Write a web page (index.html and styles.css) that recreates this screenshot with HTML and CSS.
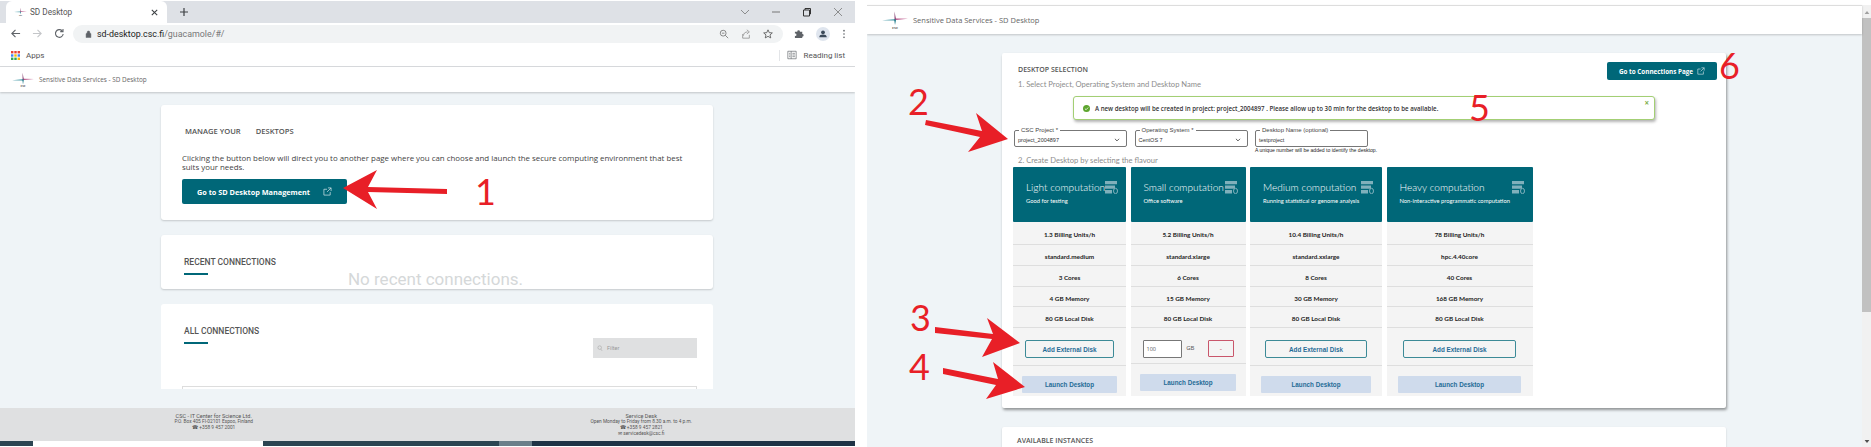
FILE: index.html
```html
<!DOCTYPE html>
<html lang="en">
<head>
    <meta charset="UTF-8">
    <title>SD Desktop</title>
    <link rel="stylesheet" href="styles.css">
</head>
<body>
    <section class="shot shot-left">
        <div class="tabstrip">
            <div class="tab">
                <svg class="csc-tab" viewBox="0 0 26 18"><use href="#csc-mark"/></svg>
                <span>SD Desktop</span>
                <svg class="tab-x" viewBox="0 0 10 10"><path d="M2 2l6 6M8 2l-6 6" stroke="#3c4043" stroke-width="1.2"/></svg>
            </div>
            <svg class="tab-new" viewBox="0 0 10 10"><path d="M5 1v8M1 5h8" stroke="#3c4043" stroke-width="1.2"/></svg>
            <div class="win-buttons">
                <svg viewBox="0 0 10 10"><path d="M1 3l4 4 4-4" fill="none" stroke="#777" stroke-width=".8"/></svg>
                <svg viewBox="0 0 10 10"><path d="M1 5h8" stroke="#777"/></svg>
                <svg viewBox="0 0 10 10"><path d="M1.5 3h6v6h-6zM3 3V1.5h5.5V7H7.5" fill="none" stroke="#333"/></svg>
                <svg viewBox="0 0 10 10"><path d="M1 1l8 8M9 1l-8 8" stroke="#777" stroke-width=".8"/></svg>
            </div>
        </div>
        <div class="toolbar">
            <svg class="nav-icon" viewBox="0 0 12 12"><path d="M11 6H2M6 2L2 6l4 4" fill="none" stroke="#5f6368" stroke-width="1.2"/></svg>
            <svg class="nav-icon" viewBox="0 0 12 12"><path d="M1 6h9M6 2l4 4-4 4" fill="none" stroke="#c4c6c9" stroke-width="1.2"/></svg>
            <svg class="nav-icon" viewBox="0 0 12 12"><path d="M10 6.5A4.2 4.2 0 1 1 8.8 3M9.8 1v3h-3" fill="none" stroke="#5f6368" stroke-width="1.2"/></svg>
            <div class="omnibox">
                <svg class="lock" viewBox="0 0 8 10"><path d="M1 4.500h6V9.500H1zM2.300 4.500V3a1.700 1.700 0 0 1 3.400 0v1.500" fill="#5f6368" stroke="#5f6368" stroke-width=".6"/></svg>
                <span class="url">sd-desktop.csc.fi<em>/guacamole/#/</em></span>
                <div class="omni-icons">
                    <svg viewBox="0 0 12 12"><circle cx="5" cy="5" r="3.5" fill="none" stroke="#777"/><path d="M7.500 7.500L11 11M3.500 5h3" stroke="#777"/></svg>
                    <svg viewBox="0 0 12 12"><path d="M2 6v5h8V7M3 8c0-3 2-4.500 5-4.500M7 1l3 2.500L7 6" fill="none" stroke="#888" stroke-width=".9"/></svg>
                    <svg viewBox="0 0 12 12"><path d="M6 1l1.500 3.400 3.700.3-2.800 2.400.9 3.600L6 8.800l-3.300 1.900.9-3.600L.8 4.700l3.700-.3z" fill="none" stroke="#555"/></svg>
                </div>
            </div>
            <svg class="puzzle" viewBox="0 0 12 12"><path d="M1 4h2.500a1.500 1.500 0 1 1 3 0H9v2.500a1.500 1.500 0 1 1 0 3V11H1V8.500a1.300 1.300 0 1 0 0-2.500z" fill="#5f6368"/></svg>
            <div class="avatar"><svg viewBox="0 0 12 12"><circle cx="6" cy="4" r="2.3" fill="#3c4a5a"/><path d="M1.500 10c0-2.500 2-3.300 4.500-3.300s4.500.8 4.500 3.300z" fill="#3c4a5a"/></svg></div>
            <svg class="kebab" viewBox="0 0 4 12"><circle cx="2" cy="2" r="1" fill="#5f6368"/><circle cx="2" cy="6" r="1" fill="#5f6368"/><circle cx="2" cy="10" r="1" fill="#5f6368"/></svg>
        </div>
        <div class="bookmarks">
            <svg class="apps" viewBox="0 0 9 9">
                <rect width="2.4" height="2.4" fill="#ea4335"/><rect x="3.3" width="2.4" height="2.4" fill="#ea4335"/><rect x="6.6" width="2.4" height="2.4" fill="#ea4335"/>
                <rect y="3.3" width="2.4" height="2.4" fill="#4285f4"/><rect x="3.3" y="3.3" width="2.4" height="2.4" fill="#fbbc04"/><rect x="6.6" y="3.3" width="2.4" height="2.4" fill="#4285f4"/>
                <rect y="6.6" width="2.4" height="2.4" fill="#34a853"/><rect x="3.3" y="6.6" width="2.4" height="2.4" fill="#34a853"/><rect x="6.6" y="6.6" width="2.4" height="2.4" fill="#fbbc04"/>
            </svg>
            <span>Apps</span>
            <div class="reading">
                <svg viewBox="0 0 12 12"><path d="M1 1.500h10v9H1zM5 1.500v9M2.500 4h1.500M2.500 6h1.500M2.500 8h1.500M6.500 4H9.500M6.500 6H9.500M6.500 8H9.500" fill="none" stroke="#5f6368" stroke-width=".8"/></svg>
                <span>Reading list</span>
            </div>
        </div>

        <header class="app-header left-head">
            <svg class="csc-logo" viewBox="0 0 26 18"><use href="#csc-mark"/></svg>
            <span>Sensitive Data Services - SD Desktop</span>
        </header>

        <main class="left-main">
            <div class="card card-manage">
                <h2 class="manage-title"><span>MANAGE YOUR</span><span>DESKTOPS</span></h2>
                <p class="manage-text">Clicking the button below will direct you to another page where you can choose and launch the secure computing environment that best suits your needs.</p>
                <button class="btn-teal btn-manage">
                    <span>Go to SD Desktop Management</span>
                    <svg class="ext-icon" viewBox="0 0 10 10"><use href="#ext-mark"/></svg>
                </button>
            </div>
            <div class="card card-recent">
                <h2 class="conn-title">RECENT CONNECTIONS</h2>
                <div class="conn-rule"></div>
                <p class="no-recent">No recent connections.</p>
            </div>
            <div class="card card-all">
                <h2 class="conn-title">ALL CONNECTIONS</h2>
                <div class="conn-rule"></div>
                <div class="filter">
                    <svg viewBox="0 0 10 12"><circle cx="4.5" cy="4.5" r="3" fill="none" stroke="#999" stroke-width=".8"/><path d="M6.500 7l2 3" stroke="#999" stroke-width=".8"/></svg>
                    <span>Filter</span>
                </div>
                <div class="conn-table"></div>
            </div>
        </main>

        <footer class="left-foot">
            <div class="foot-col">
                <strong>CSC - IT Center for Science Ltd.</strong>
                <span>P.O. Box 405 FI-02101 Espoo, Finland</span>
                <span>&#9742; +358 9 457 2001</span>
            </div>
            <div class="foot-col">
                <strong>Service Desk</strong>
                <span>Open Monday to Friday from 8.30 a.m. to 4 p.m.</span>
                <span>&#9742; +358 9 457 2821</span>
                <span>&#9993; servicedesk@csc.fi</span>
            </div>
        </footer>
        <div class="taskbar">
            <i class="tb-dark tb-a"></i><i class="tb-white"></i><i class="tb-dark tb-b"></i><i class="tb-light"></i><i class="tb-dark tb-c"></i>
        </div>
    </section>

    <section class="shot shot-right">
        <div class="right-page">
            <header class="app-header right-head">
                <svg class="csc-logo" viewBox="0 0 26 18"><use href="#csc-mark"/></svg>
                <span>Sensitive Data Services - SD Desktop</span>
            </header>
            <main class="right-main">
                <div class="card card-select">
                    <div class="select-top">
                        <div>
                            <h2 class="select-title">DESKTOP SELECTION</h2>
                            <p class="step">1. Select Project, Operating System and Desktop Name</p>
                        </div>
                        <button class="btn-teal btn-conn">
                            <span>Go to Connections Page</span>
                            <svg class="ext-icon" viewBox="0 0 10 10"><use href="#ext-mark"/></svg>
                        </button>
                    </div>
                    <div class="alert">
                        <svg class="alert-ok" viewBox="0 0 10 10"><circle cx="5" cy="5" r="5" fill="#5da52e"/><path d="M2.700 5.200l1.700 1.600 3-3.200" fill="none" stroke="#fff" stroke-width="1.1"/></svg>
                        <span>A new desktop will be created in project: project_2004897 . Please allow up to 30 min for the desktop to be available.</span>
                        <span class="alert-x">&times;</span>
                    </div>
                    <div class="fields">
                        <div class="field">
                            <label>CSC Project *</label>
                            <span>project_2004897</span>
                            <svg viewBox="0 0 10 6"><path d="M1.500 1l3.500 3.500L8.500 1" fill="none" stroke="#333" stroke-width="1.3"/></svg>
                        </div>
                        <div class="field">
                            <label>Operating System *</label>
                            <span>CentOS 7</span>
                            <svg viewBox="0 0 10 6"><path d="M1.500 1l3.500 3.500L8.500 1" fill="none" stroke="#333" stroke-width="1.3"/></svg>
                        </div>
                        <div class="field-wrap">
                            <div class="field">
                                <label>Desktop Name (optional)</label>
                                <span>testproject</span>
                            </div>
                            <small>A unique number will be added to identify the desktop.</small>
                        </div>
                    </div>
                    <p class="step step-two">2. Create Desktop by selecting the flavour</p>
                    <div class="flavours">
                        <div class="flavour">
                            <div class="flavour-head">
                                <svg class="server" viewBox="0 0 13 13"><use href="#server-mark"/></svg>
                                <h3>Light computation</h3>
                                <p>Good for testing</p>
                            </div>
                            <ul class="specs">
                                <li>1.3 Billing Units/h</li>
                                <li>standard.medium</li>
                                <li>3 Cores</li>
                                <li>4 GB Memory</li>
                                <li>80 GB Local Disk</li>
                            </ul>
                            <div class="disk-row"><button class="btn-disk">Add External Disk</button></div>
                            <button class="btn-launch">Launch Desktop</button>
                        </div>
                        <div class="flavour">
                            <div class="flavour-head">
                                <svg class="server" viewBox="0 0 13 13"><use href="#server-mark"/></svg>
                                <h3>Small computation</h3>
                                <p>Office software</p>
                            </div>
                            <ul class="specs">
                                <li>5.2 Billing Units/h</li>
                                <li>standard.xlarge</li>
                                <li>6 Cores</li>
                                <li>15 GB Memory</li>
                                <li>80 GB Local Disk</li>
                            </ul>
                            <div class="disk-row disk-open">
                                <span class="disk-input">100</span>
                                <span class="disk-gb">GB</span>
                                <button class="btn-remove">-</button>
                            </div>
                            <button class="btn-launch">Launch Desktop</button>
                        </div>
                        <div class="flavour">
                            <div class="flavour-head">
                                <svg class="server" viewBox="0 0 13 13"><use href="#server-mark"/></svg>
                                <h3>Medium computation</h3>
                                <p>Running statistical or genome analysis</p>
                            </div>
                            <ul class="specs">
                                <li>10.4 Billing Units/h</li>
                                <li>standard.xxlarge</li>
                                <li>8 Cores</li>
                                <li>30 GB Memory</li>
                                <li>80 GB Local Disk</li>
                            </ul>
                            <div class="disk-row"><button class="btn-disk">Add External Disk</button></div>
                            <button class="btn-launch">Launch Desktop</button>
                        </div>
                        <div class="flavour">
                            <div class="flavour-head">
                                <svg class="server" viewBox="0 0 13 13"><use href="#server-mark"/></svg>
                                <h3>Heavy computation</h3>
                                <p>Non-interactive programmatic computation</p>
                            </div>
                            <ul class="specs">
                                <li>78 Billing Units/h</li>
                                <li>hpc.4.40core</li>
                                <li>40 Cores</li>
                                <li>168 GB Memory</li>
                                <li>80 GB Local Disk</li>
                            </ul>
                            <div class="disk-row"><button class="btn-disk">Add External Disk</button></div>
                            <button class="btn-launch">Launch Desktop</button>
                        </div>
                    </div>
                </div>
                <div class="card card-instances">
                    <h2 class="select-title">AVAILABLE INSTANCES</h2>
                </div>
            </main>
        </div>
        <div class="scrollbar">
            <svg class="scroll-arrow" viewBox="0 0 8 5"><path d="M0 5h8L4 0z" fill="#a0a0a0"/></svg>
            <div class="scroll-thumb"></div>
            <svg class="scroll-arrow scroll-down" viewBox="0 0 8 5"><path d="M0 0h8L4 5z" fill="#505050"/></svg>
        </div>
    </section>

    <!-- red notes drawn on top of the screenshot -->
    <svg class="notes" viewBox="0 0 1871 447">
        <path d="M343 188L377 170L368 187L447 189L447 194L368 192L377 209Z"/>
        <path d="M1008 139L976 113L982 131L926 120L925 125L980 137L968 152Z"/>
        <path d="M1020 343L987 318L993 334L935 327L935 333L992 339L982 357Z"/>
        <path d="M1025 387L993 362L998 379L943 368L943 374L996 385L986 399Z"/>
        <text x="475" y="205">1</text>
        <text x="908" y="115">2</text>
        <text x="910" y="331">3</text>
        <text x="909" y="380">4</text>
        <text x="1469" y="121">5</text>
        <text x="1719" y="79">6</text>
    </svg>

    <svg class="defs" width="0" height="0">
        <defs>
            <symbol id="csc-mark" viewBox="0 0 26 18">
                <path d="M0 9.2L13 8.200 13 9.600z" fill="#2f8d9c"/>
                <path d="M13 7.600L26 7.800 13 9z" fill="#b5477f"/>
                <path d="M12.500 0.500L14 8 12.500 9z" fill="#8c4a78"/>
                <path d="M12.200 8.500H14L13 14z" fill="#137485"/>
                <text class="csc-word" x="13" y="17.500">csc</text>
            </symbol>
            <symbol id="ext-mark" viewBox="0 0 10 10">
                <path d="M8 5.500V9H1V2.500h3.500M5.500 1H9v3.500M9 1L4.500 5.500" fill="none" stroke="#cfe3e8" stroke-width=".8"/>
            </symbol>
            <symbol id="server-mark" viewBox="0 0 13 13">
                <path d="M0 0h12v3.200H0zM0 4.500h10v3.200H0zM0 9h7v3.500H0z" fill="#7fb0bb"/>
                <ellipse cx="10.500" cy="10" rx="2" ry="2.700" fill="none" stroke="#7fb0bb"/>
            </symbol>
        </defs>
    </svg>
</body>
</html>
```

FILE: styles.css
```css
* {
    box-sizing: border-box;
}
html, body {
    margin: 0;
    padding: 0;
    height: 447px;
    overflow: hidden;
}
body {
    position: relative;
    display: flex;
    gap: 12px;
    background-color: #fff;
    font-family: "Open Sans", sans-serif;
    color: #333;
}
button {
    font-family: inherit;
    cursor: pointer;
}
h2, h3, p, ul {
    margin: 0;
    padding: 0;
}
.shot {
    height: 447px;
    overflow: hidden;
}
.shot-left {
    width: 855px;
    flex: none;
    display: flex;
    flex-direction: column;
    padding-top: 1px;
}
.shot-right {
    flex: 1;
    display: flex;
    padding-top: 5px;
}

/* browser chrome */
.tabstrip {
    height: 22px;
    background-color: #dee1e6;
    display: flex;
    align-items: center;
    padding-left: 6px;
}
.tab {
    width: 161px;
    height: 22px;
    align-self: flex-end;
    background-color: #fff;
    border-radius: 6px 6px 0 0;
    display: flex;
    align-items: center;
    padding: 0 8px;
    font-family: "Roboto", sans-serif;
    font-size: 8.2px;
    color: #555;
}
.csc-tab {
    width: 13px;
    height: 10px;
    margin-right: 3px;
}
.tab span {
    flex: 1;
}
.tab-x {
    width: 9px;
    height: 9px;
}
.tab-new {
    width: 10px;
    height: 10px;
    margin-left: 12px;
}
.win-buttons {
    margin-left: auto;
    display: flex;
    gap: 21px;
    padding-right: 12px;
}
.win-buttons svg {
    width: 10px;
    height: 10px;
}
.toolbar {
    height: 21px;
    background-color: #fff;
    display: flex;
    align-items: center;
    padding-left: 10px;
}
.nav-icon {
    width: 11px;
    height: 11px;
    margin-right: 11px;
}
.omnibox {
    width: 710px;
    height: 18px;
    margin-left: -3px;
    background-color: #f1f3f4;
    border-radius: 9px;
    display: flex;
    align-items: center;
    padding: 0 10px 0 12px;
}
.lock {
    width: 7px;
    height: 8px;
    margin-right: 5px;
}
.url {
    font-family: "Roboto", sans-serif;
    font-size: 8.9px;
    color: #222;
}
.url em {
    font-style: normal;
    color: #777;
}
.omni-icons {
    margin-left: auto;
    display: flex;
    gap: 12px;
}
.omni-icons svg {
    width: 10px;
    height: 10px;
}
.puzzle {
    width: 11px;
    height: 11px;
    margin-left: 11px;
}
.avatar {
    width: 14px;
    height: 14px;
    margin-left: 11px;
    border-radius: 50%;
    background-color: #dfe5ee;
    padding: 2px;
    display: flex;
}
.kebab {
    width: 4px;
    height: 10px;
    margin-left: 12px;
}
.bookmarks {
    height: 23px;
    background-color: #fff;
    border-bottom: 1px solid #d9dbde;
    display: flex;
    align-items: center;
    padding-left: 11px;
    font-family: "Roboto", sans-serif;
    font-size: 8px;
    color: #555;
}
.apps {
    width: 9px;
    height: 9px;
    margin-right: 6px;
}
.reading {
    margin-left: auto;
    display: flex;
    align-items: center;
    height: 11px;
    border-left: 1px solid #e3e5e8;
    padding: 0 10px 0 7px;
    gap: 6px;
}
.reading svg {
    width: 10px;
    height: 10px;
}

/* app pages */
.app-header {
    background-color: #fff;
    display: flex;
    align-items: center;
    box-shadow: 0 1px 2px rgba(0, 0, 0, 0.2);
    position: relative;
    color: #666;
}
.left-head {
    height: 25px;
    padding-left: 12px;
    font-size: 6.4px;
    flex: none;
}
.right-head {
    height: 29px;
    border-top: 1px solid #ddd;
    padding-left: 15px;
    font-size: 7.5px;
    flex: none;
}
.csc-logo {
    width: 22px;
    height: 16px;
    margin-right: 5px;
}
.right-head .csc-logo {
    width: 26px;
    height: 18px;
}
.csc-word {
    font-family: "Open Sans", sans-serif;
    font-size: 4px;
    font-weight: 600;
    text-anchor: middle;
    fill: #444;
}
.card {
    background-color: #fff;
    border-radius: 3px;
    box-shadow: 0 1px 2px rgba(0, 0, 0, 0.18);
}

/* left page */
.left-main {
    height: 316px;
    background-color: #eff4f7;
    padding: 13px 142px 0 161px;
    flex: none;
}
.card-manage {
    height: 115px;
    padding: 21px 21px 0;
}
.manage-title {
    font-size: 7.6px;
    font-weight: 600;
    color: #555;
    display: flex;
    gap: 15px;
    padding-left: 3px;
    line-height: 10px;
}
.manage-text {
    width: 515px;
    font-size: 7.9px;
    line-height: 9px;
    margin-top: 18px;
    color: #444;
}
.btn-teal {
    background-color: #006778;
    color: #fff;
    border: none;
    border-radius: 2px;
    font-weight: 700;
    display: flex;
    align-items: center;
    justify-content: space-between;
}
.btn-manage {
    width: 165px;
    height: 25px;
    margin-top: 7px;
    padding: 0 15px;
    font-size: 7.3px;
}
.ext-icon {
    width: 9px;
    height: 9px;
}
.card-recent {
    height: 54px;
    margin-top: 15px;
    padding: 22px 23px 0;
}
.conn-title {
    font-family: "Roboto", sans-serif;
    font-size: 8.5px;
    font-weight: 500;
    line-height: 10px;
    color: #555;
}
.conn-rule {
    width: 24px;
    height: 2px;
    background-color: #006778;
    margin-top: 6px;
}
.no-recent {
    font-family: "Roboto", sans-serif;
    font-size: 17px;
    line-height: 18px;
    color: #d5d8d9;
    text-align: center;
    margin-top: -5px;
    padding-right: 3px;
}
.card-all {
    height: 85px;
    margin-top: 15px;
    padding: 22px 20px 0 23px;
    border-radius: 3px 3px 0 0;
    box-shadow: none;
    position: relative;
}
.filter {
    width: 104px;
    height: 20px;
    background-color: #dfe0e1;
    display: flex;
    align-items: center;
    gap: 4px;
    padding-left: 4px;
    font-family: "Roboto", sans-serif;
    font-size: 5.5px;
    color: #999;
    position: absolute;
    top: 34px;
    right: 16px;
}
.filter svg {
    width: 6px;
    height: 9px;
}
.conn-table {
    position: absolute;
    left: 21px;
    right: 16px;
    top: 82px;
    height: 3px;
    border: 1px solid #ddd;
    border-bottom: none;
}
.left-foot {
    height: 33px;
    background-color: #dfe0e1;
    display: flex;
    font-family: "Roboto", sans-serif;
    font-size: 4.8px;
    line-height: 6px;
    color: #555;
    padding-top: 5px;
    flex: none;
}
.foot-col {
    display: flex;
    flex-direction: column;
    align-items: center;
    width: 430px;
}
.foot-col strong {
    font-weight: 400;
    font-size: 5.5px;
}
.taskbar {
    height: 5px;
    display: flex;
    flex: none;
}
.taskbar i {
    display: block;
    height: 5px;
}
.tb-dark {
    background-color: #2c4552;
}
.tb-a {
    width: 33px;
}
.tb-white {
    width: 230px;
    background-color: #fff;
}
.tb-b {
    width: 236px;
}
.tb-light {
    width: 33px;
    background-color: #6b7f8a;
}
.tb-c {
    flex: 1;
    background-color: #1f3346;
}

/* right page */
.right-page {
    flex: 1;
    display: flex;
    flex-direction: column;
    min-width: 0;
}
.right-main {
    flex: 1;
    background-color: #eff4f7;
    padding: 19px 136px 0 135px;
}
.card-select {
    height: 355px;
    padding: 12px 9px 0 11px;
    box-shadow: 1px 2px 3px rgba(0, 0, 0, 0.4);
    border-radius: 2px;
}
.select-top {
    display: flex;
    justify-content: space-between;
    align-items: flex-start;
    padding-left: 5px;
    height: 31px;
}
.select-title {
    font-size: 7px;
    font-weight: 600;
    line-height: 10px;
    color: #555;
}
.step {
    font-family: "Lato", sans-serif;
    font-size: 7.6px;
    line-height: 10px;
    color: #8d8d8d;
    margin-top: 4px;
}
.btn-conn {
    width: 110px;
    height: 18px;
    margin-top: -3px;
    padding: 0 12px;
    font-size: 6.3px;
}
.btn-conn .ext-icon {
    width: 8px;
    height: 8px;
}
.alert {
    position: relative;
    width: 582px;
    height: 24px;
    margin-left: 60px;
    border: 1px solid #a3cf74;
    border-radius: 3px;
    box-shadow: 1px 2px 3px rgba(0, 0, 0, 0.3);
    display: flex;
    align-items: center;
    padding-left: 9px;
    gap: 5px;
    background-color: #fff;
    font-size: 6.15px;
    font-weight: 600;
    color: #333;
}
.alert-ok {
    width: 7px;
    height: 7px;
}
.alert-x {
    position: absolute;
    top: 1px;
    right: 5px;
    font-size: 8px;
    line-height: 10px;
    font-weight: 700;
    color: #7fb04a;
}
.fields {
    display: flex;
    gap: 7.5px;
    margin-top: 10px;
    padding-left: 1px;
}
.field {
    position: relative;
    width: 113px;
    height: 17px;
    border: 1px solid #777;
    border-radius: 2px;
    display: flex;
    align-items: center;
    justify-content: space-between;
    padding: 3px 6px 0 3px;
    font-family: "Liberation Sans", sans-serif;
    font-size: 5.5px;
    color: #333;
}
.field svg {
    width: 6px;
    height: 4px;
}
.field label {
    position: absolute;
    top: -5px;
    left: 4px;
    background-color: #fff;
    padding: 0 2px;
    font-size: 6px;
    line-height: 8px;
    color: #444;
}
.field-wrap small {
    display: block;
    font-family: "Liberation Sans", sans-serif;
    font-size: 5.1px;
    line-height: 7px;
    color: #222;
    white-space: nowrap;
}
.step-two {
    margin-top: 1px;
    padding-left: 5px;
}
.flavours {
    display: grid;
    grid-template-columns: 113px 115px 132px 146px;
    gap: 4.5px;
    margin-top: 2px;
}
.flavour {
    background-color: #f4f4f4;
    height: 229px;
    display: flex;
    flex-direction: column;
}
.flavour-head {
    position: relative;
    height: 55px;
    background-color: #006778;
    border-radius: 1px;
    padding: 13px 0 0 13px;
    color: #fff;
    font-family: "Lato", sans-serif;
}
.flavour-head h3 {
    font-size: 10.1px;
    font-weight: 300;
    line-height: 14px;
}
.flavour-head p {
    font-size: 5.8px;
    line-height: 8px;
    margin-top: 3px;
}
.server {
    position: absolute;
    top: 14px;
    right: 8px;
    width: 13px;
    height: 13px;
}
.specs {
    list-style: none;
    font-family: "Lato", sans-serif;
    font-size: 6.4px;
    font-weight: 700;
    color: #222;
    text-align: center;
    padding-top: 2px;
}
.specs li {
    height: 20.8px;
    padding-top: 3px;
    line-height: 17px;
    border-bottom: 1px solid #dedede;
}
.specs li:first-child {
    height: 21px;
    padding-top: 2px;
}
.disk-row {
    height: 38px;
    border-bottom: 1px solid #dedede;
    padding: 12px 11% 0;
    display: flex;
    gap: 4px;
}
.btn-disk {
    width: 100%;
    height: 18px;
    background-color: transparent;
    border: 1px solid #3c8a97;
    border-radius: 2px;
    font-family: "Liberation Sans", sans-serif;
    font-size: 6.3px;
    font-weight: 700;
    color: #1f6b96;
}
.disk-open {
    padding: 12px 12px 0;
    height: 36px;
    align-items: flex-start;
}
.disk-input {
    width: 41px;
    height: 18px;
    background-color: #fff;
    border: 1px solid #777;
    border-radius: 1px;
    font-size: 5.5px;
    line-height: 16px;
    padding-left: 3px;
    color: #555;
}
.disk-gb {
    font-size: 6px;
    line-height: 16px;
    width: 19px;
    color: #555;
}
.btn-remove {
    width: 26px;
    height: 17px;
    background-color: transparent;
    border: 1px solid #c9566b;
    border-radius: 1px;
    font-size: 7px;
    color: #c9566b;
    padding: 0;
}
.btn-launch {
    height: 17px;
    margin: 10px 8% 0;
    background-color: #cfdbec;
    border: none;
    border-radius: 1px;
    font-family: "Liberation Sans", sans-serif;
    font-size: 6.3px;
    font-weight: 700;
    color: #1f6b96;
}
.card-instances {
    height: 40px;
    margin-top: 19px;
    padding: 9px 15px;
    border-radius: 2px 2px 0 0;
}

/* scrollbar of the right window */
.scrollbar {
    width: 9px;
    flex: none;
    background-color: #f1f1f1;
    display: flex;
    flex-direction: column;
    align-items: center;
    padding: 6px 0 4px;
}
.scroll-arrow {
    width: 6px;
    height: 3px;
    flex: none;
}
.scroll-thumb {
    width: 9px;
    height: 294px;
    margin-top: 4px;
    background-color: #c1c1c1;
}
.scroll-down {
    margin-top: auto;
}

/* annotations */
.notes {
    position: absolute;
    left: 0;
    top: 0;
    width: 1871px;
    height: 447px;
    pointer-events: none;
}
.notes path {
    fill: #e81f27;
}
.notes text {
    font-family: "Lato", sans-serif;
    font-size: 36px;
    fill: #e81f27;
}
.defs {
    position: absolute;
}
```
